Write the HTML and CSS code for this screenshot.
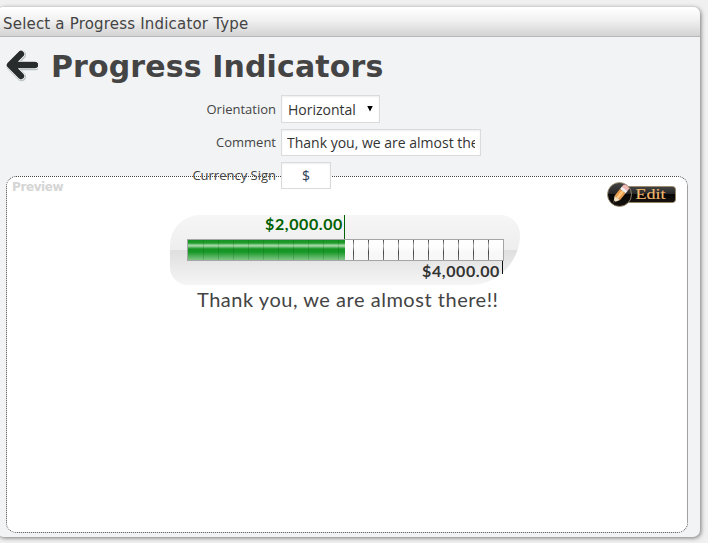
FILE: index.html
```html
<!DOCTYPE html>
<html lang="en">
<head>
<meta charset="utf-8">
<title>Progress Indicators</title>
<link rel="stylesheet" href="styles.css">
</head>
<body>
<main class="window">
  <header class="titlebar"><span>Select a Progress Indicator Type</span></header>
  <div class="heading">
    <svg class="back" width="36" height="36" viewBox="0 0 36 36" fill="none" stroke-linecap="round" stroke-linejoin="round">
      <path d="M19 6 8 17 19 28M9 17H33" stroke="#b9c3c6" stroke-width="9" transform="translate(.6 .8)"/>
      <path d="M19 6 8 17 19 28M9 17H33" stroke="#fff" stroke-width="8"/>
      <path d="M19 6 8 17 19 28M9 17H33" stroke="#292c2d" stroke-width="6.500"/>
    </svg>
    <h1>Progress Indicators</h1>
  </div>
  <form class="form">
    <label for="orientation">Orientation</label>
    <div class="field select" id="orientation"><span>Horizontal</span><i class="caret"></i></div>
    <label for="comment">Comment</label>
    <input class="field comment" id="comment" value="Thank you, we are almost there!!">
    <label for="currency">Currency Sign</label>
    <input class="field currency" id="currency" value="$">
  </form>
  <section class="preview">
    <div class="preview-top">
      <span class="legend">Preview</span>
      <svg class="edit" width="70" height="26" viewBox="0 0 70 26">
        <defs>
          <linearGradient id="dark" x2="0" y2="1"><stop offset="0" stop-color="#444"/><stop offset=".48" stop-color="#262626"/><stop offset=".5" stop-color="#070707"/><stop offset="1" stop-color="#17130d"/></linearGradient>
        </defs>
        <rect x="12" y="4.500" width="56.500" height="16" rx="3" fill="url(#dark)" stroke="#9b8460" stroke-width=".8"/>
        <circle cx="12.500" cy="12.500" r="12" fill="url(#dark)" stroke="#ab9a7c" stroke-width=".8"/>
        <g transform="translate(13.500 12) rotate(39)">
          <path d="M-3.500-9.500Q0-12 3.500-9.500V-5.500H-3.500Z" fill="#efb8b5"/>
          <path d="M-3.500-6.500H3.500V-3.500H-3.500Z" fill="#eee"/>
          <path d="M-3.500-3.500H3.500V5H-3.500Z" fill="#e99b4c"/>
          <path d="M-1.200-3.500H1.200V5H-1.200Z" fill="#ffc77d"/>
          <path d="M-3.500 5H3.500L0 11Z" fill="#f5dfbd"/>
          <path d="M-1.200 9H1.200L0 11Z" fill="#222"/>
        </g>
        <text x="28.500" y="17.300" textLength="30" lengthAdjust="spacingAndGlyphs" class="edit-text">Edit</text>
      </svg>
    </div>
    <div class="meter">
      <div class="amount current"><span>$2,000.00</span></div>
      <div class="track"><div class="fill"></div></div>
      <div class="amount goal"><span>$4,000.00</span></div>
    </div>
    <svg class="message" width="310" height="32"><text x="7" y="22" textLength="301" lengthAdjust="spacing">Thank you, we are almost there!!</text></svg>
  </section>
</main>
</body>
</html>
```
FILE: styles.css
```css
* { box-sizing: border-box; }
body { margin: 0; height: 543px; overflow: hidden; background: #f0f0f0; color: #444; font-family: "Open Sans", sans-serif; }
.window { width: 703px; height: 530px; margin: 7px 0 0 -3px; padding-left: 3px; background: #f2f3f5; border-radius: 7px; box-shadow: 1px 1px 4px #777; }
.titlebar { height: 30px; margin-left: -3px; padding: 4px 6px 0; display: flex; align-items: center; border-bottom: 1px solid #b8b8b8; border-radius: 7px 7px 0 0; background: linear-gradient(#fff 5%, #f1f1f1 45%, #d3d3d3); font: 15px/24px "DejaVu Sans", sans-serif; letter-spacing: .19px; }
.heading { height: 58px; display: flex; align-items: center; padding-left: 2px; }
.back { flex: none; margin-top: -1px; }
h1 { margin: 1px 0 0 13px; font: bold 30px/40px "DejaVu Sans", sans-serif; letter-spacing: .12px; white-space: nowrap; }
.form { position: relative; z-index: 1; display: grid; grid-template-columns: 276px 200px; grid-template-rows: 28px 28px 28px; gap: 5px; align-items: center; width: 481px; }
.form label { text-align: right; font-size: 13px; line-height: 26px; }
.field { height: 28px; border: 1px solid #d9dbdc; background: #fff; box-shadow: inset 0 1px 2px #eee; color: #333; font: 14px/24px "Open Sans", sans-serif; padding: 0 5px; border-radius: 0; outline: 0; }
.select { width: 99px; display: flex; justify-content: space-between; align-items: center; padding: 2px 6px 0; }
.caret { width: 6px; height: 6px; background: #000; clip-path: polygon(0 0, 100% 0, 50% 100%); margin-top: -3px; }
.comment { width: 200px; height: 27px; }
.currency { width: 50px; height: 27px; text-align: center; color: #2d4059; }
.preview { width: 682px; height: 357px; margin: -13px 0 0 6px; border: 1px dotted #444; border-radius: 10px; background: #fff; }
.preview-top { height: 38px; display: flex; justify-content: space-between; padding: 4px 10px 0 5px; }
.legend { font: bold 12px/12px "DejaVu Sans", sans-serif; letter-spacing: -.4px; color: #d5d5d5; }
.edit { flex: none; margin-top: 1px; }
.edit-text { font: 15px "Liberation Serif", serif; fill: #f2b86e; stroke: #f2b86e; stroke-width: .15px; }
.meter { width: 350px; height: 70px; margin-left: 163px; padding-left: 17px; border-radius: 31px 20px 52px 18px; background: linear-gradient(#f6f6f6, #eee 50%, #dfdfdf 50%, #f5f5f5); }
.amount { font: bold 16px/18px Lato, sans-serif; text-align: right; letter-spacing: .6px; }
.current { width: 158px; height: 24px; border-right: 1px solid #006400; padding-right: 1px; color: #006000; }
.track { width: 317px; height: 22px; border: 1px solid #a5a5a5; background: linear-gradient(#fff0, #fff9 30%, #fff0 60%, #fff4), repeating-linear-gradient(90deg, transparent 0 14px, #444 14px 15px) 1px 0 / 315px 100%, linear-gradient(#fff, #f5f5f5); }
.fill { width: 157px; height: 20px; background: repeating-linear-gradient(90deg, transparent 0 14px, #064c0d30 14px 15px) 1px 0, linear-gradient(#159323, #219b2d 15%, #a5dca8 27%, #8cca90 32%, #139521 45%, #189726 60%, #80c786); }
.goal { width: 316px; height: 13px; border-right: 1px solid #111; padding-right: 2px; color: #333; line-height: 20px; }
.message { display: block; margin: 0 0 0 183px; overflow: visible; }
.message text { font: 20px Lato, sans-serif; fill: #444; }
```
